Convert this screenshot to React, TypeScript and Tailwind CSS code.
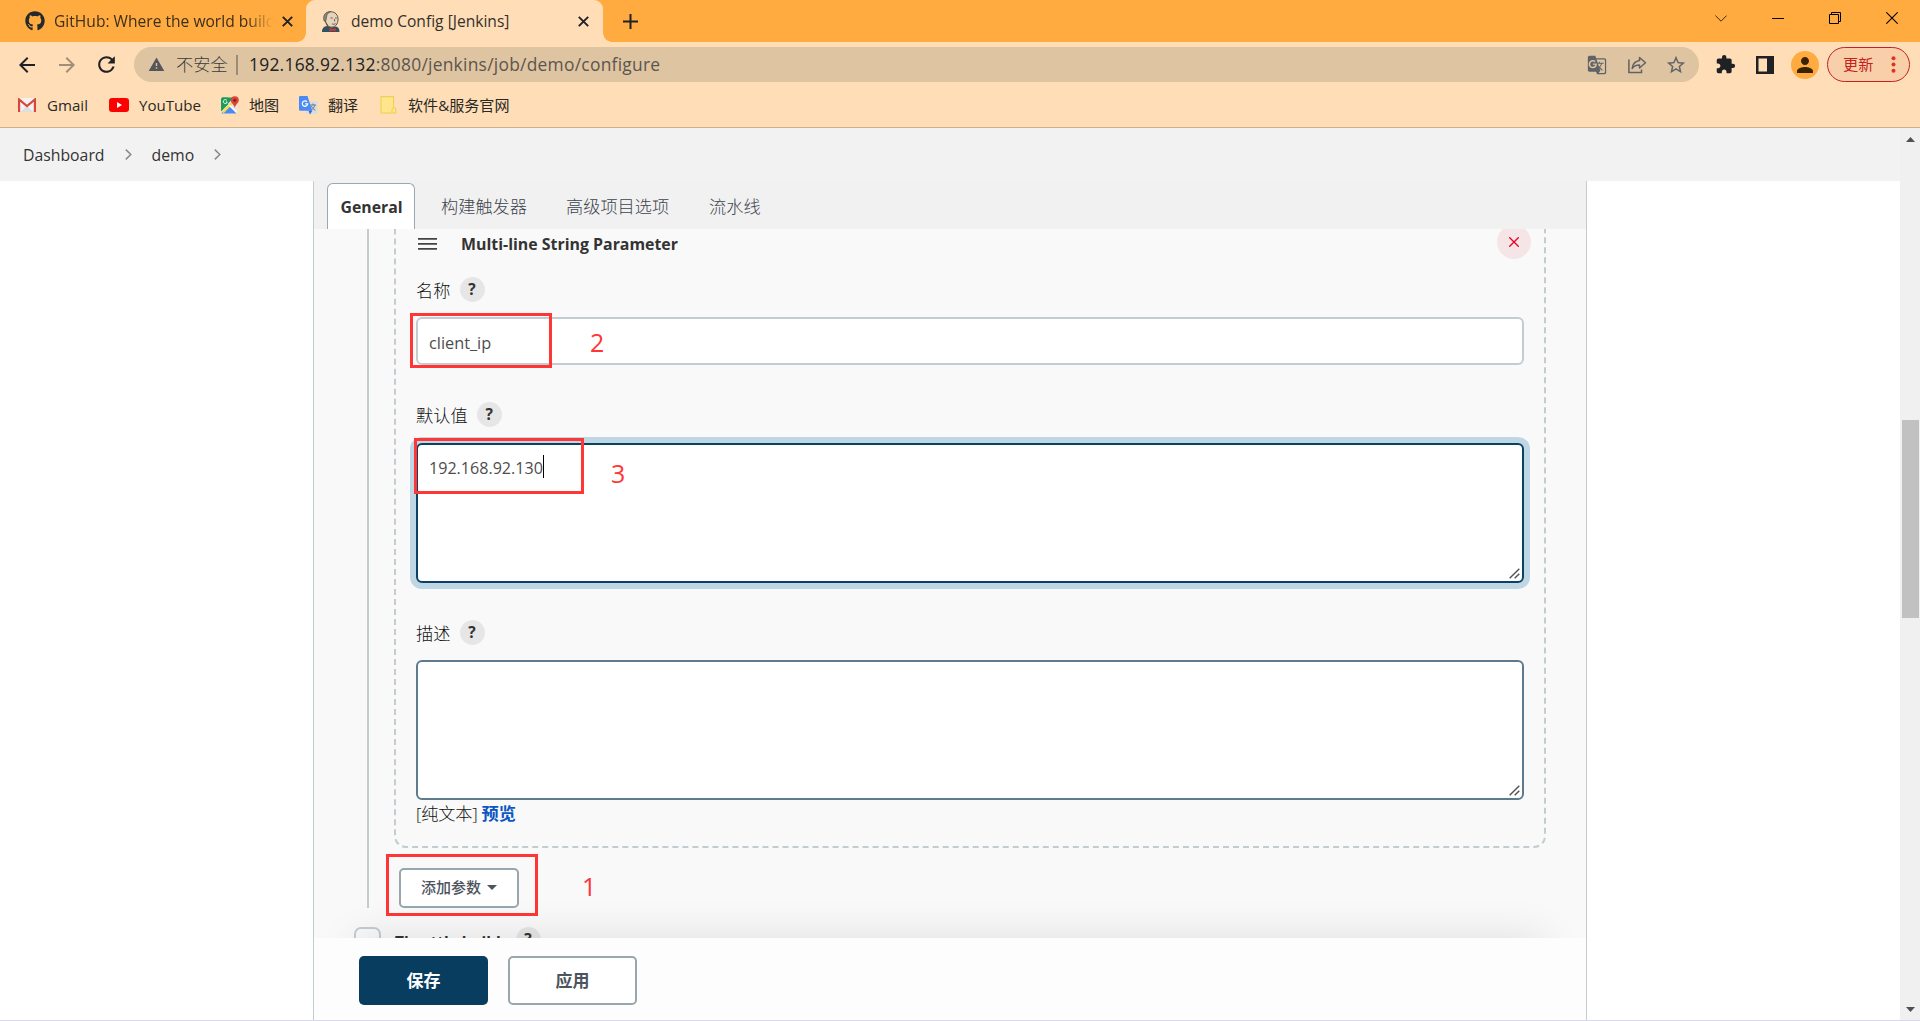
import React from 'react';
import { FaGithub } from 'react-icons/fa';
import {
  MdArrowBack,
  MdArrowForward,
  MdExtension,
  MdGTranslate,
  MdPerson,
  MdRefresh,
  MdStarBorder,
  MdWarning,
} from 'react-icons/md';

function JenkinsIcon() {
  return (
    <svg width="20" height="21" viewBox="0 0 20 21">
      <path d="M1 21c0-4 2-5.500 5-6l4 1.500 5-1c2.500.5 3.500 2.500 3.500 5.500z" fill="#335061" />
      <path d="M4 8C3 3 6 .8 10 .8S17.500 4 17 9c-.3 4-2.500 7-6 7.200C7 16.200 4.500 13 4 8z" fill="#e6d3ba" stroke="#4a4643" strokeWidth=".9" />
      <path d="M3 10C1.500 4 4.500.6 9.500.6 6.800 1.800 5.600 4 5.400 7l-.8 3.700z" fill="#8a8580" stroke="#4a4643" strokeWidth=".6" />
      <path d="M5 11.500 7 16l3 1" stroke="#4a4643" strokeWidth="1" fill="none" />
      <path d="M9.500 7h2.200M14 7h1.800M13.200 8l.6 2.400M11 12.800c1.200.7 2.600.6 3.600-.2" stroke="#5b534e" strokeWidth=".9" fill="none" />
      <path d="m8.500 17 3 1.300 3-1.300v3.600l-3-1.200-3 1.200z" fill="#d33833" />
    </svg>
  );
}

function GmailIcon() {
  return (
    <svg width="18" height="14" viewBox="0 0 18 14">
      <rect x="0" y="0" width="18" height="14" rx="1.200" fill="#f2f2f2" />
      <path d="m2.500 14 6.500-6 6.500 6z" fill="#dedede" />
      <path d="M1.100 14V1.500L9 8l7.900-6.500V14" fill="none" stroke="#d9463a" strokeWidth="2.200" />
    </svg>
  );
}

function YouTubeIcon() {
  return (
    <svg width="20" height="14" viewBox="0 0 20 14">
      <rect width="20" height="14" rx="3" fill="#f00" />
      <path d="M8 4v6l5-3z" fill="#fff" />
    </svg>
  );
}

function MapsIcon() {
  return (
    <svg width="18" height="18" viewBox="0 0 18 18">
      <rect x="0" y="1.500" width="16" height="16" rx="1.500" fill="#e8e8e8" />
      <path d="M1 1.500h12L1 14z" fill="#1e9c57" />
      <path d="M0 2.500v13l7-7V1.500H1z" fill="#1e9c57" />
      <path d="M.5 17 8 9.500l7.500 8H1.500z" fill="#4a89f3" />
      <path d="m1 15.500 13-13 1.500 1.500L2.500 17.500z" fill="#fdd84c" />
      <path d="m9 9 6.500 6.500V17L8 10z" fill="#fff" />
      <path d="M6 4.500a2 2 0 1 0 .3 1.500H4.800" fill="none" stroke="#fff" strokeWidth=".9" />
      <path d="M13.800.2a4 4 0 0 1 4 4c0 3-3.300 3.800-4 8-.7-4.200-4-5-4-8a4 4 0 0 1 4-4z" fill="#db4437" />
      <circle cx="13.800" cy="4.200" r="1.500" fill="#7d231c" />
    </svg>
  );
}

function TranslateIcon() {
  return (
    <svg width="19" height="19" viewBox="0 0 19 19">
      <rect x="7" y="5" width="11.500" height="13" rx="1" fill="#dcdcdc" />
      <path d="M11 9h6M14 7.500V9m1.800 0c-.5 2.500-2 4-4 5.200m.6-4.200c.8 2 2.200 3.500 4 4.200" stroke="#5f7d8c" strokeWidth="1" fill="none" />
      <path d="M9.500 14.500h4L11 18.500z" fill="#3367d6" />
      <path d="M1.200 0h7.300l4.700 14.700H1.200A1.200 1.200 0 0 1 0 13.500V1.200A1.200 1.200 0 0 1 1.200 0z" fill="#4a8af4" />
      <path d="M8 5.800a2.700 2.700 0 1 0 .7 2H6.200" fill="none" stroke="#fff" strokeWidth="1.200" />
    </svg>
  );
}

function FolderIcon() {
  return (
    <svg width="17" height="18" viewBox="0 0 17 18">
      <path d="M1 .6h12.500v11l2.200 1V17H1z" fill="#ffe68c" stroke="#f0cf55" strokeWidth="1.100" />
      <path d="M13.500 11.500 12 13v4" fill="none" stroke="#f0cf55" strokeWidth="1" />
    </svg>
  );
}

function ShareIcon() {
  return (
    <svg width="19" height="18" viewBox="0 0 19 18" fill="none" stroke="#5f6368" strokeWidth="1.500">
      <path d="M.9 3.500V16.500H13.500V13.500" />
      <path d="M11.500 1.500 17.500 6.800 11.500 12V9C8 9 5.800 10 4.200 12.500 4.700 8.500 7 5.200 11.500 4.600z" strokeLinejoin="round" />
    </svg>
  );
}

function TabClose({ className }: { className?: string }) {
  return (
    <svg className={className} width="11" height="11" viewBox="0 0 11 11" stroke="#202124" strokeWidth="1.900">
      <path d="M.8.8l9.400 9.400M10.200.8.8 10.200" />
    </svg>
  );
}

function Help() {
  return (
    <span className="flex h-[25px] w-[25px] items-center justify-center rounded-full bg-[#e6e6e6] pr-px text-[15.500px] font-bold text-[#333]">
      ?
    </span>
  );
}

function FieldLabel({ text, className }: { text: string; className: string }) {
  return (
    <div className={`flex h-[25px] items-center gap-[9.500px] ${className}`}>
      <span className="relative top-px text-[17.200px] font-light text-[#111]">{text}</span>
      <Help />
    </div>
  );
}

function Grip() {
  return (
    <svg className="absolute right-[2px] bottom-[2px]" width="11" height="11" viewBox="0 0 11 11" stroke="#505050" strokeWidth="1.400">
      <path d="M.7 10.300 10.300.7M5.700 10.300l4.600-4.600" />
    </svg>
  );
}

const bookmarks = [
  { label: 'Gmail', icon: <GmailIcon />, box: 'w-[91px]', gap: 'gap-[11px]' },
  { label: 'YouTube', icon: <YouTubeIcon />, box: 'w-[112px]', gap: 'gap-[10px]' },
  { label: '地图', icon: <MapsIcon />, box: 'w-[78px]', gap: 'gap-[10px]' },
  { label: '翻译', icon: <TranslateIcon />, box: 'w-[81px]', gap: 'gap-[10px]' },
  { label: '软件&服务官网', icon: <FolderIcon />, box: 'w-[140px]', gap: 'gap-[11px]' },
];

function TabStrip() {
  return (
    <div className="flex h-[42px] bg-[#ffab40]">
      <div className="flex w-[306px] items-center pl-[25px]">
        <FaGithub size={20} color="#24292f" />
        <div className="ml-[9px] w-[219px] overflow-hidden pt-[2px] text-[15.600px] whitespace-nowrap text-[#3c2f1c] [mask-image:linear-gradient(to_right,#000_88%,transparent)]">
          GitHub: Where the world build
        </div>
        <TabClose className="ml-[9px]" />
      </div>
      <div className="relative flex w-[297px] items-center rounded-t-[9px] bg-[#ffdeb7] pl-[15px] before:absolute before:bottom-0 before:-left-[9px] before:h-[9px] before:w-[9px] before:bg-[radial-gradient(circle_at_0_0,transparent_8.500px,#ffdeb7_9px)] after:absolute after:-right-[9px] after:bottom-0 after:h-[9px] after:w-[9px] after:bg-[radial-gradient(circle_at_100%_0,transparent_8.500px,#ffdeb7_9px)]">
        <JenkinsIcon />
        <span className="ml-[10px] flex-1 pt-[2px] text-[15.600px] text-[#33302c]">demo Config [Jenkins]</span>
        <TabClose className="mr-[14px]" />
      </div>
      <svg className="mt-[14px] ml-[20px]" width="15" height="15" viewBox="0 0 15 15" stroke="#202124" strokeWidth="2">
        <path d="M7.500 0v15M0 7.500h15" />
      </svg>
      <div className="ml-auto flex h-[36px] items-center gap-[45px] pr-[22px]">
        <svg width="12" height="7" viewBox="0 0 12 7" fill="none" stroke="#3b2a12">
          <path d="m.4.6 5.600 5.600L11.600.6" />
        </svg>
        <svg width="12" height="1" viewBox="0 0 12 1">
          <rect width="12" height="1" fill="#000" />
        </svg>
        <svg width="12" height="12" viewBox="0 0 12 12" fill="none" stroke="#000">
          <path d="M.5 2.500h9v9h-9zM2.500 2.500v-2h9v9h-2" />
        </svg>
        <svg width="12" height="12" viewBox="0 0 12 12" stroke="#000" strokeWidth="1.100">
          <path d="m.3.3 11.400 11.400M11.700.3.300 11.700" />
        </svg>
      </div>
    </div>
  );
}

function Toolbar() {
  return (
    <div className="flex h-[43px] items-center bg-[#ffdeb7] pt-[2px] pl-[15px]">
      <MdArrowBack size={24} color="#202124" />
      <MdArrowForward size={24} color="#a08e78" className="ml-[16px]" />
      <MdRefresh size={25} color="#202124" className="ml-[15px]" />
      <div className="ml-[15px] flex h-[35px] w-[1565px] items-center rounded-full bg-[#dfc4a1] pl-[14px]">
        <MdWarning size={17} color="#55565a" />
        <span className="ml-[11px] w-[52px] text-[17.200px] font-light whitespace-nowrap text-[#3a3b3e]">不安全</span>
        <span className="ml-[8px] h-[20px] w-[2px] bg-[#9c8b76]" />
        <span className="ml-[11px] text-[17.400px] tracking-[0.260px] text-[#5a564f]">
          <span className="text-[#202124]">192.168.92.132</span>:8080/jenkins/job/demo/configure
        </span>
        <div className="ml-auto flex items-center pr-[12px]">
          <MdGTranslate size={20} color="#5f6368" />
          <span className="ml-[21px]">
            <ShareIcon />
          </span>
          <MdStarBorder size={22} color="#5f6368" className="ml-[18px]" />
        </div>
      </div>
      <MdExtension size={21} color="#202124" className="ml-[16px]" />
      <svg className="ml-[20px]" width="18" height="18" viewBox="0 0 18 18">
        <path fillRule="evenodd" d="M0 0h18v18H0zM2.500 2.500v13h8.500v-13z" fill="#202124" />
      </svg>
      <span className="ml-[17px] flex h-[28px] w-[28px] items-center justify-center rounded-full bg-[#ffab40]">
        <MdPerson size={24} color="#3b2200" />
      </span>
      <div className="ml-[8px] flex h-[35px] w-[83px] items-center rounded-full border border-[#c5221f] bg-[#f9cfa9] pl-[15px] text-[15.200px] text-[#c5221f]">
        <span className="w-[31px] whitespace-nowrap">更新</span>
        <svg className="ml-[17px]" width="5" height="17" viewBox="0 0 5 17" fill="#dd3327">
          <circle cx="2.500" cy="2.200" r="2" />
          <circle cx="2.500" cy="8.500" r="2" />
          <circle cx="2.500" cy="14.800" r="2" />
        </svg>
      </div>
    </div>
  );
}

function Bookmarks() {
  return (
    <div className="flex h-[43px] items-center border-b border-[#ccb08b] bg-[#ffdeb7] pb-px pl-[18px] text-[15.100px] text-[#2a2825]">
      {bookmarks.map((b) => (
        <div key={b.label} className={`flex items-center whitespace-nowrap ${b.box} ${b.gap}`}>
          {b.icon}
          <span>{b.label}</span>
        </div>
      ))}
    </div>
  );
}

function Crumb({ text }: { text: string }) {
  return (
    <>
      <span className="pt-[2px]">{text}</span>
      <svg className="mr-[20px] ml-[20px]" width="7" height="11" viewBox="0 0 7 11" fill="none" stroke="#8a8a8a" strokeWidth="1.500">
        <path d="m.8.6 5 4.900-5 4.900" />
      </svg>
    </>
  );
}

function ParameterForm() {
  return (
    <div className="ml-[53px] border-l-2 border-[#c3cdd1]">
      <div className="-mt-[30px] ml-[25px] h-[649px] w-[1152px] rounded-[12px] border-2 border-dashed border-[#c3cdd1] px-[20px] pt-[24px]">
        <div className="flex h-[34px] items-center">
          <svg className="relative top-[2px] ml-[2px]" width="19" height="12" viewBox="0 0 19 12" fill="#444">
            <path d="M0 0h19v1.700H0zM0 5h19v1.700H0zM0 10h19v1.700H0z" />
          </svg>
          <span className="relative top-[3px] ml-[24px] flex-1 text-[15.900px] font-bold text-[#333]">Multi-line String Parameter</span>
          <button className="-mr-[7px] flex h-[34px] w-[34px] items-center justify-center rounded-full bg-[#f6e5e7]">
            <svg width="10" height="10" viewBox="0 0 10 10" stroke="#e6001f" strokeWidth="1.300">
              <path d="m.3.3 9.400 9.400M9.700.3.300 9.700" />
            </svg>
          </button>
        </div>

        <FieldLabel text="名称" className="mt-[18px]" />
        <div className="relative mt-[15px] flex h-[48px] items-center rounded-[6px] border-2 border-[#c3cdd1] bg-white pl-[11px] text-[16.300px] text-[#4d4d4d]">
          <span className="pt-[5px]">client_ip</span>
          <div className="absolute -top-[6px] -left-[8px] h-[55px] w-[142px] border-3 border-[#ff3636]" />
          <span className="absolute top-[6px] left-[172px] text-[25px] leading-[34px] text-[#ff3636]">2</span>
        </div>

        <FieldLabel text="默认值" className="mt-[37px]" />
        <div className="relative mt-[16px] flex h-[140px] items-start rounded-[6px] border-2 border-[#0b4165] bg-white pt-[10px] pl-[11px] text-[16.100px] text-[#4d4d4d] shadow-[0_0_0_6px_#bfd6e4]">
          <span className="leading-[27px]">192.168.92.130</span>
          <span className="h-[23px] w-px bg-black" />
          <Grip />
          <div className="absolute -top-[7px] -left-[4px] h-[56px] w-[170px] border-3 border-[#ff3636]" />
          <span className="absolute top-[11px] left-[193px] text-[25px] leading-[34px] text-[#ff3636]">3</span>
        </div>

        <FieldLabel text="描述" className="mt-[37px]" />
        <div className="relative mt-[15px] h-[140px] rounded-[6px] border-2 border-[#5d7a8e] bg-white">
          <Grip />
        </div>
        <div className="flex h-[28px] items-center gap-[4px] text-[17.200px] font-light whitespace-nowrap text-[#111]">
          <span className="tracking-[-0.200px]">[纯文本]</span>
          <a className="font-bold text-[#0b55c4]">预览</a>
        </div>
      </div>

      <div className="relative mt-[20px] ml-[30px] h-[40px] w-[120px]">
        <button className="flex h-full w-full items-center justify-center gap-[6px] rounded-[5px] border-2 border-[#98a6ae] bg-white pb-[2px] text-[15px] font-medium text-[#4d545d]">
          添加参数
          <svg width="10" height="5" viewBox="0 0 10 5" fill="#4d545d">
            <path d="M0 0h10L5 5z" />
          </svg>
        </button>
        <div className="absolute -top-[14px] -left-[13px] h-[62px] w-[152px] border-3 border-[#ff3636]" />
        <span className="absolute top-[1px] left-[183px] text-[25px] leading-[34px] text-[#ff3636]">1</span>
      </div>
    </div>
  );
}

function ConfigTabs() {
  return (
    <div className="flex h-[48px] shrink-0 items-end bg-[#f1f1f1] pl-[13px] text-[17.200px] font-light whitespace-nowrap text-[#3d444d]">
      <div className="flex h-[46px] w-[88px] items-center justify-center rounded-t-[6px] border border-b-0 border-[#98a9b1] bg-white pt-[2px] pl-px text-[15.800px] font-bold text-[#333]">
        General
      </div>
      <span className="ml-[26px] flex h-[46px] w-[125px] items-center pt-[2px]">构建触发器</span>
      <span className="flex h-[46px] w-[143px] items-center pt-[2px]">高级项目选项</span>
      <span className="flex h-[46px] items-center pt-[2px]">流水线</span>
    </div>
  );
}

export default function App() {
  return (
    <div className="flex h-[1021px] w-[1920px] flex-col overflow-hidden bg-white font-['Open_Sans','Noto_Sans_CJK_SC',sans-serif]">
      <TabStrip />
      <Toolbar />
      <Bookmarks />

      {/* Page viewport and its scrollbar */}
      <div className="flex h-[892px]">
        <div className="flex w-[1900px] flex-col">
          <div className="flex h-[53px] shrink-0 items-center bg-[#f2f2f2] pl-[23px] text-[15.800px] text-[#333]">
            <Crumb text="Dashboard" />
            <Crumb text="demo" />
          </div>
          <div className="ml-[313px] flex h-[839px] w-[1274px] flex-col border-x border-[#c3cdd1] bg-[#f9f9f9]">
            <ConfigTabs />
            <div className="h-[709px] shrink-0 overflow-hidden">
              <ParameterForm />
              <div className="mt-[19px] ml-[40px] flex h-[27px] items-start">
                <span className="h-[27px] w-[27px] rounded-[7px] border-2 border-[#c3cdd1]" />
                <span className="mt-[4px] ml-[14px] w-[121px] text-[15.400px] font-bold text-[#333]">Throttle builds</span>
                <Help />
              </div>
            </div>
            <div className="relative h-[82px] shrink-0 [clip-path:inset(-60px_0_0_0)]">
              <div className="absolute inset-x-[42px] top-0 bottom-0 shadow-[0_0_44px_rgba(0,0,0,0.110)]" />
              <div className="relative flex h-full gap-[20px] bg-[#fdfdfd] pt-[18px] pl-[45px] text-[17px] font-bold">
                <button className="h-[49px] w-[129px] rounded-[5px] bg-[#083d60] text-white">保存</button>
                <button className="h-[49px] w-[129px] rounded-[5px] border-2 border-[#98a6ae] bg-white text-[#4d545d]">应用</button>
              </div>
            </div>
          </div>
        </div>
        <div className="flex w-[20px] flex-col items-center bg-[#f0f0f0] pt-[9px] pb-[8px]">
          <svg className="ml-[1px]" width="9" height="5" viewBox="0 0 9 5" fill="#505050">
            <path d="M4.500 0 9 5H0z" />
          </svg>
          <div className="mt-[278px] ml-px h-[198px] w-[17px] bg-[#c1c1c1]" />
          <svg className="mt-auto ml-[1px]" width="9" height="5" viewBox="0 0 9 5" fill="#505050">
            <path d="M0 0h9L4.500 5z" />
          </svg>
        </div>
      </div>
      <div className="h-px bg-[#d9d9ea]" />
    </div>
  );
}
